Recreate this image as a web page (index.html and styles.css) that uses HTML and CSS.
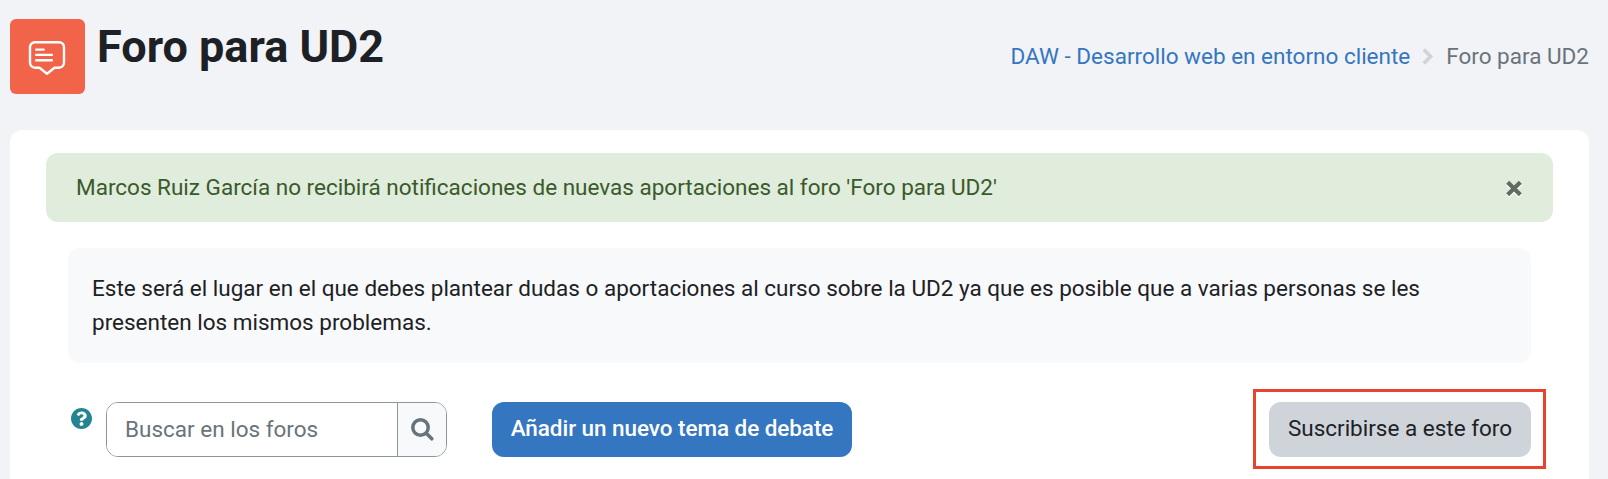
FILE: index.html
```html
<!DOCTYPE html>
<html lang="es">
<head>
    <meta charset="UTF-8">
    <meta name="viewport" content="width=device-width, initial-scale=1.0">
    <title>Foro para UD2</title>
    <link rel="stylesheet" href="styles.css">
</head>
<body>
    <header class="page-header">
        <div class="activity-icon">
            <svg width="38" height="36" viewBox="0 0 38 36" fill="none" stroke="#fff" stroke-width="2.4" stroke-linecap="round" stroke-linejoin="round">
                <path d="M7 2.200h24a5 5 0 0 1 5 5v15.500a5 5 0 0 1-5 5h-4.500l-7.500 6-7.500-6H7a5 5 0 0 1-5-5v-15.500a5 5 0 0 1 5-5z"/>
                <path d="M8.200 9.600h7.600M8.200 14.900h15.700M8.200 20.300h15.700"/>
            </svg>
        </div>
        <h1>Foro para UD2</h1>
        <nav class="breadcrumb">
            <a href="#">DAW - Desarrollo web en entorno cliente</a>
            <svg class="breadcrumb-arrow" width="12" height="17" viewBox="0 0 12 17" fill="none" stroke="#ced4da" stroke-width="3.6">
                <path d="M1.800 1.600l6.800 6.900-6.800 6.900"/>
            </svg>
            <span>Foro para UD2</span>
        </nav>
    </header>

    <main class="card">
        <div class="alert">
            <p>Marcos Ruiz García no recibirá notificaciones de nuevas aportaciones al foro 'Foro para UD2'</p>
            <button type="button" class="close" aria-label="Cerrar">
                <svg width="16" height="18" viewBox="0 0 16 18" fill="none" stroke-width="4.2">
                    <path stroke="#fff" d="M1.700 3.700l12.600 12.600M14.300 3.700L1.700 16.300"/>
                    <path stroke="#616c60" d="M1.700 2.200l12.600 12.600M14.300 2.200L1.700 14.800"/>
                </svg>
            </button>
        </div>

        <div class="description">
            <p>Este será el lugar en el que debes plantear dudas o aportaciones al curso sobre la UD2 ya que es posible que a varias personas se les presenten los mismos problemas.</p>
        </div>

        <div class="toolbar">
            <svg class="help-icon" width="21" height="21" viewBox="8 8 496 496">
                <path fill="#248494" d="M504 256c0 137-111 248-248 248S8 393 8 256 119 8 256 8s248 111 248 248zM262.700 90c-54.500 0-89.300 23-116.500 63.800-3.500 5.300-2.400 12.400 2.700 16.300l34.700 26.300c5.200 3.900 12.600 3 16.700-2.100 17.900-22.700 30.100-35.800 57.300-35.800 20.400 0 45.700 13.100 45.700 33 0 15-12.400 22.700-32.500 34C247.100 238.500 216 255 216 296v4c0 6.600 5.400 12 12 12h56c6.600 0 12-5.400 12-12v-1.300c0-28.600 83.800-29.800 83.800-107.200C379.800 133 319.200 90 262.700 90zM256 338c-25.400 0-46 20.600-46 46s20.600 46 46 46 46-20.600 46-46-20.600-46-46-46z"/>
            </svg>
            <form class="search">
                <input type="text" placeholder="Buscar en los foros">
                <button type="button" aria-label="Buscar">
                    <svg width="23" height="23" viewBox="0 0 23 23" fill="none" stroke="#6a737b" stroke-width="3.5" stroke-linecap="round">
                        <circle cx="9.500" cy="9.500" r="7.700"/>
                        <path d="M15.300 15.300l5.500 5.500"/>
                    </svg>
                </button>
            </form>
            <button type="button" class="btn btn-primary">Añadir un nuevo tema de debate</button>
            <div class="highlight">
                <button type="button" class="btn btn-secondary">Suscribirse a este foro</button>
            </div>
        </div>
    </main>
</body>
</html>
```

FILE: styles.css
```css
:root {
    --primary-color: #3576c1;
    --background-color: #f1f3f7;
    --text-color: #1d2125;
    --muted-color: #6a737b;
    --border-color: #8f959e;
}
* {
    box-sizing: border-box;
}
body {
    margin: 0;
    height: 479px;
    padding: 19px 19px 0 10px;
    overflow: hidden;
    display: flex;
    flex-direction: column;
    background-color: var(--background-color);
    color: var(--text-color);
    font-family: Roboto, sans-serif;
    font-size: 22.5px;
    line-height: 34px;
}
p {
    margin: 0;
}
.page-header {
    display: flex;
    align-items: flex-start;
    height: 111px;
    flex-shrink: 0;
}
.activity-icon {
    width: 75px;
    height: 75px;
    padding: 21px 18px;
    border-radius: 6px;
    background-color: #f1644a;
}
.activity-icon svg {
    display: block;
}
h1 {
    margin: 1px 0 0 12px;
    font-size: 45px;
    font-weight: 700;
    line-height: 54px;
}
.breadcrumb {
    display: flex;
    align-items: center;
    margin: 20px 0 0 auto;
    color: var(--muted-color);
}
.breadcrumb a {
    color: var(--primary-color);
    text-decoration: none;
}
.breadcrumb-arrow {
    margin: 0 12px;
}
.card {
    flex: 1;
    padding: 23px 36px 0;
    border-radius: 12px 12px 0 0;
    background-color: #fff;
}
.alert {
    display: flex;
    align-items: flex-start;
    justify-content: space-between;
    height: 69px;
    padding: 17px 31px 0 30px;
    border-radius: 12px;
    background-color: #e0ecdc;
    color: #3a5a2b;
}
.close {
    margin-top: 10px;
    padding: 0;
    border: none;
    background: none;
}
.close svg {
    display: block;
}
.description {
    height: 115px;
    margin: 26px 22px 0;
    padding: 23px 24px;
    border-radius: 12px;
    background-color: #f8f9fb;
}
.toolbar {
    display: flex;
    align-items: flex-start;
    margin: 39px 22px 0 25px;
}
.help-icon {
    margin: 6px 14px 0 0;
}
.search {
    display: flex;
    width: 341px;
    height: 55px;
    border: 1px solid var(--border-color);
    border-radius: 12px;
    overflow: hidden;
}
.search input {
    flex: 1;
    min-width: 0;
    padding: 0 18px 2px;
    border: none;
    font: inherit;
}
.search input::placeholder {
    color: var(--muted-color);
}
.search button {
    width: 49px;
    padding: 0 0 0 13px;
    border: none;
    border-left: 1px solid var(--border-color);
    background-color: #f8f9fb;
}
.search button svg {
    display: block;
}
.btn {
    height: 55px;
    padding: 0 0 3px;
    border: none;
    border-radius: 12px;
    font: inherit;
    white-space: nowrap;
}
.btn-primary {
    width: 360px;
    margin-left: 45px;
    background-color: var(--primary-color);
    color: #fff;
    font-weight: 500;
    letter-spacing: -0.06px;
}
.btn-secondary {
    display: block;
    width: 262px;
    background-color: #ced4da;
    color: var(--text-color);
}
.highlight {
    margin: -13px -15px 0 auto;
    padding: 10px 12px 9px 13px;
    border: 3px solid #e8432f;
}
```
